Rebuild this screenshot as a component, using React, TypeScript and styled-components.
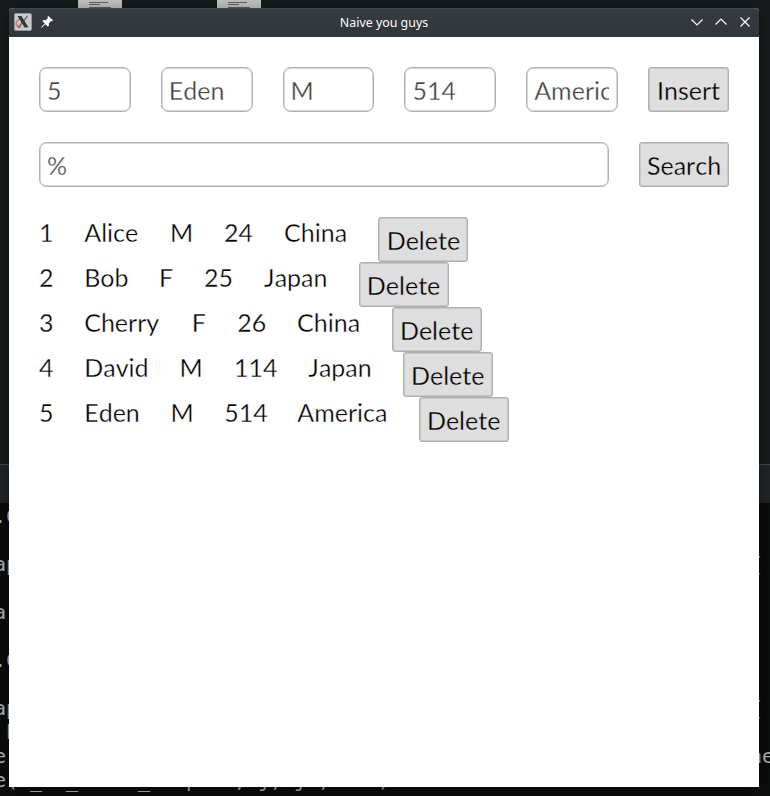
import React from "react";
import styled, { createGlobalStyle } from "styled-components";

const Global = createGlobalStyle`
  * { box-sizing: border-box; }
  body { margin: 0; overflow: hidden; background: #0b0d0c; }
`;

const Desktop = styled.main`
  position: relative;
  width: 770px;
  height: 796px;
  overflow: hidden;
  background: #171b1c;
`;

const Paper = styled.svg<{ $x: number }>`
  position: absolute;
  left: ${(p) => p.$x}px;
  top: 0;
`;

const Terminal = styled.div`
  position: absolute;
  left: 0;
  top: 464px;
  width: 770px;
  height: 332px;
  background: #0b0d0c;
  border-top: 1px solid #46494a;
`;

const TerminalHeader = styled.div`
  height: 38px;
  background: #212528;
`;

const TerminalText = styled.pre`
  margin: 1px 0 0 -6px;
  color: #b4b6b4;
  font: 20px/24px "DejaVu Sans Mono", monospace;
  letter-spacing: -0.04px;
`;

const Window = styled.section`
  position: absolute;
  left: 9px;
  top: 8px;
  width: 750px;
  height: 779px;
  border-radius: 4px 4px 0 0;
  overflow: hidden;
  background: #fff;
`;

const WindowShadow = styled.div`
  position: absolute;
  left: 9px;
  top: 8px;
  width: 750px;
  height: 779px;
  border-radius: 4px 4px 0 0;
  box-shadow: 0 3px 16px rgba(0, 0, 0, 0.4);
`;

const TitleBar = styled.header`
  display: grid;
  grid-template-columns: 1fr auto 1fr;
  align-items: center;
  height: 29px;
  padding: 0 8px 0 5px;
  background: linear-gradient(#353b40, #30363a);
  border-top: 1px solid #434a4f;
`;

const TitleIcons = styled.div`
  display: flex;
  align-items: center;
  gap: 8px;
  margin-top: -2px;
`;

const Controls = styled.div`
  display: flex;
  justify-content: flex-end;
  gap: 12px;
  margin-top: -2px;
`;

const Title = styled.h1`
  margin: -1px 0 0 3px;
  color: #fcfcfc;
  font: 400 12.4px/18px "Noto Sans", sans-serif;
`;

const Body = styled.div`
  display: flex;
  flex-direction: column;
  gap: 30px;
  padding: 30px;
  color: #000;
  font: 400 25px/30px Lato, sans-serif;
  font-kerning: none;
  -webkit-text-stroke: 0.35px #fff;
`;

const FormRow = styled.div`
  display: flex;
  gap: 30px;
  height: 45px;
`;

const Field = styled.input`
  flex: 1 1 0;
  min-width: 0;
  height: 45px;
  padding: 0 7.5px 0 7px;
  border: 1px solid #b0b0b0;
  border-radius: 7.5px;
  outline: none;
  background: #fff;
  box-shadow: inset 0 0 0 0.5px #b0b0b0;
  color: #404040;
  font: inherit;
  font-kerning: none;
`;

const Button = styled.button<{ $width: number }>`
  flex: none;
  width: ${(p) => p.$width}px;
  height: 45px;
  padding: 0;
  border: 1px solid #b0b0b0;
  border-radius: 3px;
  background: #dedede;
  box-shadow: inset 0 0 0 0.5px #b0b0b0;
  color: #000;
  font: inherit;
  font-kerning: none;
  -webkit-text-stroke: 0.35px #dedede;
`;

const Records = styled.div`
  display: flex;
  flex-direction: column;
`;

const RecordRow = styled.div`
  display: flex;
  height: 45px;
`;

const Cell = styled.span<{ $gap: number }>`
  margin-right: ${(p) => p.$gap}px;
  white-space: nowrap;
`;

type Column = [text: string, gap: number];

const people: Column[][] = [
  [["1", 30.7], ["Alice", 31.9], ["M", 30.7], ["24", 31.1], ["China", 31.3]],
  [["2", 30.7], ["Bob", 30.5], ["F", 30.9], ["25", 31], ["Japan", 31.1]],
  [["3", 30.7], ["Cherry", 32.7], ["F", 31.3], ["26", 30.8], ["China", 31.5]],
  [["4", 30.7], ["David", 31], ["M", 31.2], ["114", 30.9], ["Japan", 31]],
  [["5", 30.7], ["Eden", 30.6], ["M", 30.6], ["514", 29.6], ["America", 31.2]],
];

const lineOf = (parts: [number, string][]) =>
  parts.reduce((line, [column, text]) => line.padEnd(column) + text, "");

const terminalLines = [
  lineOf([[0, ".C"]]),
  "",
  lineOf([[0, "ap"], [63, "{"]]),
  "",
  "a",
  "",
  ".C",
  "",
  lineOf([[0, "ap"], [63, "{"]]),
  " h",
  lineOf([[0, "e"], [63, "ne"]]),
  lineOf([[0, "e("], [3, "_"], [6, "_"], [12, "_"], [16, "p"], [20, ","], [22, "j,"], [25, "j"], [27, ","], [32, ")"]]),
];

const FileIcon = ({ x }: { x: number }) => (
  <Paper $x={x} width="44" height="8">
    <rect width="44" height="8" fill="#c2c2c2" />
    <path d="M11 2.5h19M11 4.5h11M11 7.5h22" stroke="#5c5f60" />
  </Paper>
);

const XLogo = () => (
  <svg width="18" height="18" viewBox="0 0 18 18">
    <rect x=".5" y=".5" width="17" height="17" rx="1.5" fill="#c3cdd2" stroke="#8d989e" />
    <path d="M7 6C1 7 0 14 7 14.2" fill="none" stroke="#ee704d" strokeWidth="1.6" />
    <path d="M7 14.2C13 15 17 11 15 6" fill="none" stroke="#e5bd83" strokeWidth="1.3" />
    <path d="M13.5 3 4 15" stroke="#626a6e" strokeWidth="1.3" />
    <path d="M3.5 3h4l7 11.5h-4z" fill="#30383b" />
  </svg>
);

const Pin = () => (
  <svg width="14" height="14" viewBox="0 0 14 14" fill="#fcfcfc">
    <path d="M8.3 1 13 5.3l-1 1-1-.2-2.2 2.4.3 2-1.2 1.2-2.5-2.4L2 12.4 1 13l.6-1.2 3.2-3.3-2.5-2.4 1.2-1.2 2.2.3L8 3l-.6-1z" />
  </svg>
);

const ControlIcon = ({ d }: { d: string }) => (
  <svg width="12" height="12" viewBox="0 0 12 12" fill="none" stroke="#fcfcfc" strokeWidth="1.2">
    <path d={d} />
  </svg>
);

export default function App() {
  return (
    <>
      <Global />
      <Desktop>
        <FileIcon x={78} />
        <FileIcon x={217} />
        <Terminal>
          <TerminalHeader />
          <TerminalText>{terminalLines.join("\n")}</TerminalText>
        </Terminal>
        <WindowShadow />
        <Window>
          <TitleBar>
            <TitleIcons>
              <XLogo />
              <Pin />
            </TitleIcons>
            <Title>Naive you guys</Title>
            <Controls>
              <ControlIcon d="m.5 3.5 5.5 5.5 5.5-5.5" />
              <ControlIcon d="m.5 8.5L6 3l5.5 5.5" />
              <ControlIcon d="m1.5 1.5 9 9m0-9-9 9" />
            </Controls>
          </TitleBar>
          <Body>
            <FormRow>
              {people[4].map(([value]) => (
                <Field key={value} defaultValue={value} />
              ))}
              <Button $width={81}>Insert</Button>
            </FormRow>
            <FormRow>
              <Field defaultValue="%" />
              <Button $width={90}>Search</Button>
            </FormRow>
            <Records>
              {people.map((person) => (
                <RecordRow key={person[0][0]}>
                  {person.map(([value, gap]) => (
                    <Cell key={value} $gap={gap}>{value}</Cell>
                  ))}
                  <Button $width={90}>Delete</Button>
                </RecordRow>
              ))}
            </Records>
          </Body>
        </Window>
      </Desktop>
    </>
  );
}
